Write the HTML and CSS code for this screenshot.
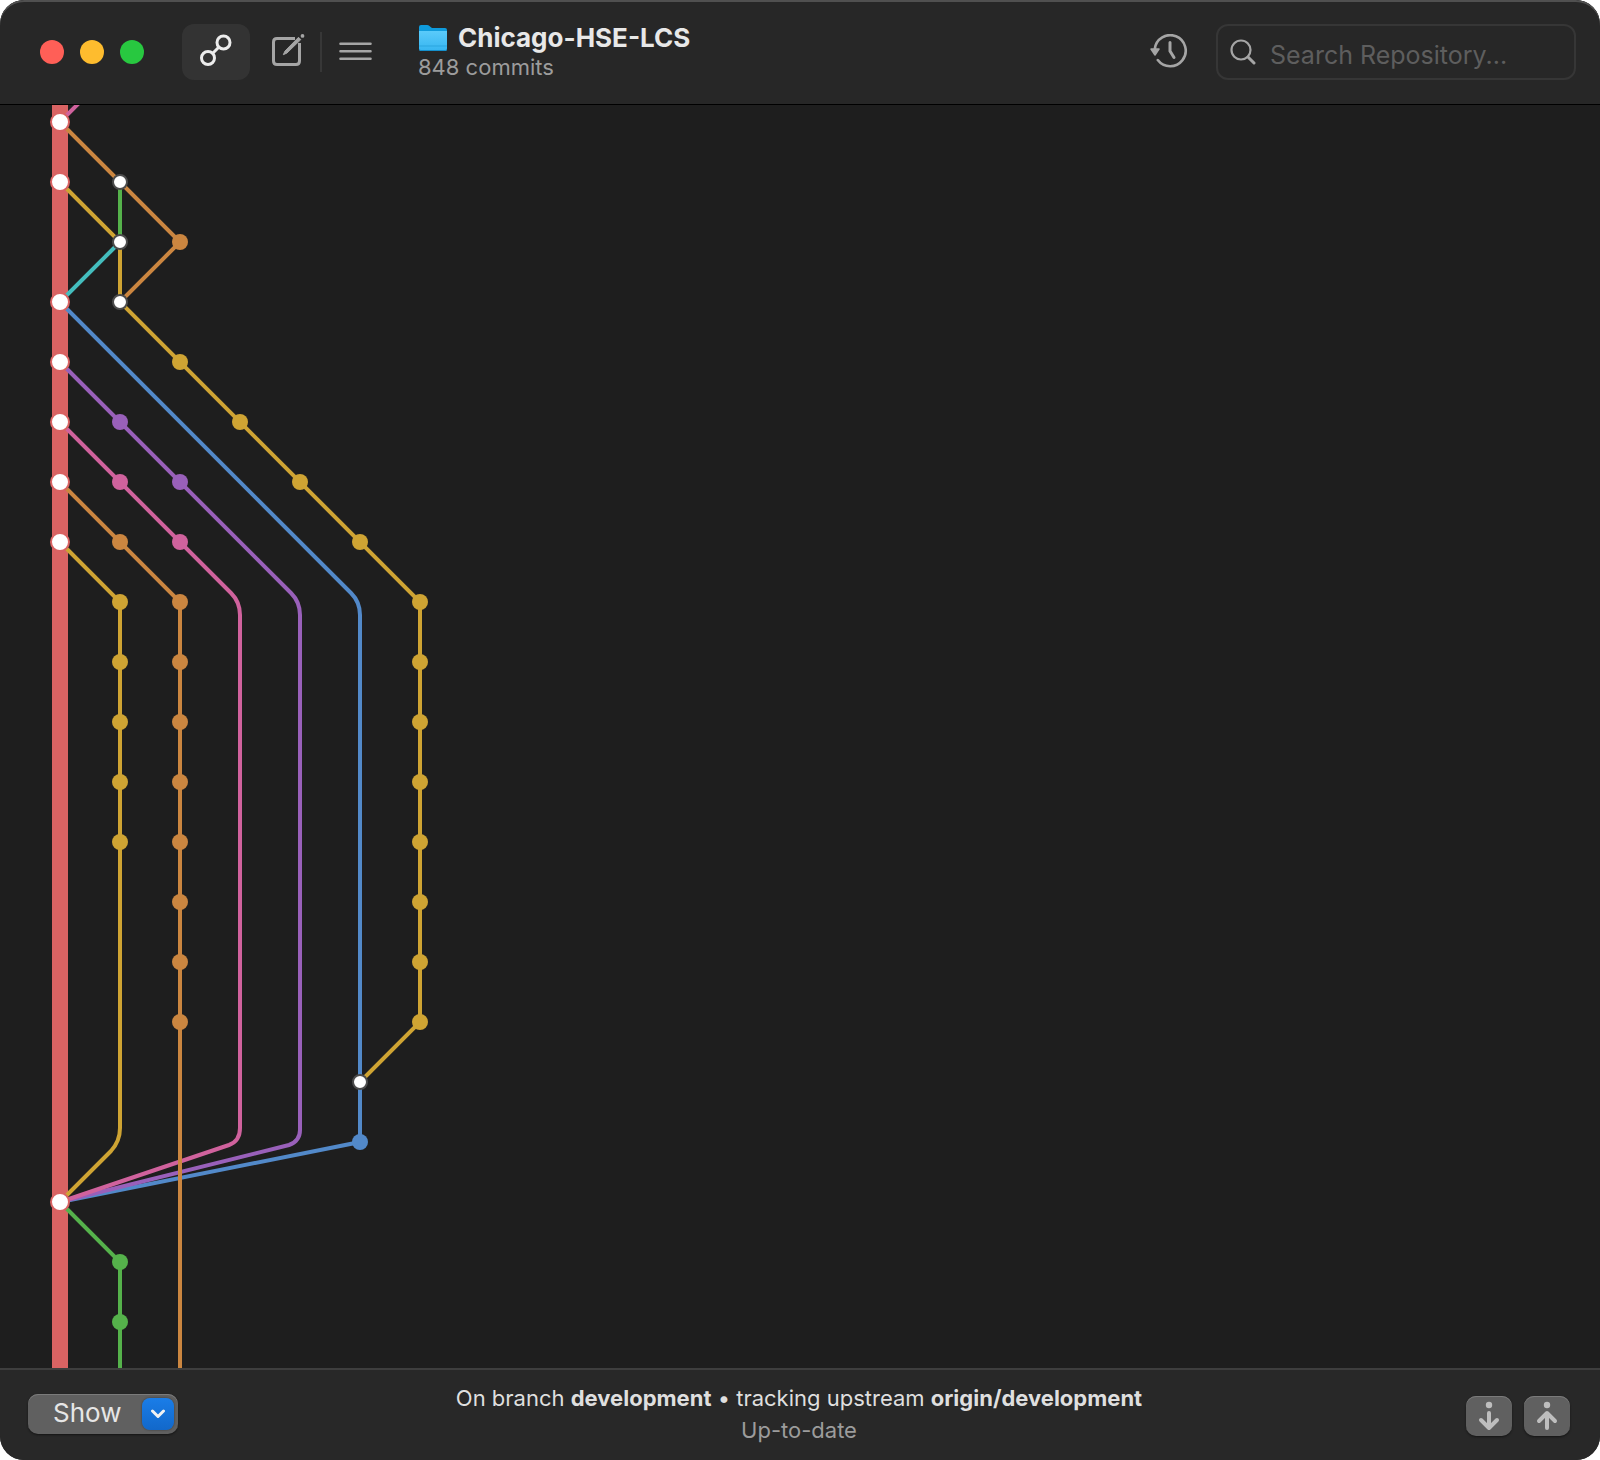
FILE: index.html
```html
<!DOCTYPE html>
<html lang="en">
<head>
<meta charset="utf-8">
<meta name="viewport" content="width=device-width, initial-scale=1">
<title>Chicago-HSE-LCS</title>
<link rel="stylesheet" href="styles.css">
</head>
<body>
<div class="window">
  <header class="toolbar">
    <div class="lights">
      <button class="light light-close" aria-label="Close"></button>
      <button class="light light-minimize" aria-label="Minimize"></button>
      <button class="light light-zoom" aria-label="Zoom"></button>
    </div>
    <div class="tools">
      <button class="tool tool-active" aria-label="Graph">
        <svg width="36" height="36" viewBox="0 0 36 36" fill="none" stroke="currentColor" stroke-width="3"><circle cx="10" cy="24" r="6.500"/><circle cx="25.500" cy="8.500" r="6.500"/><path d="M14.500 19.500l6.500-6.500"/></svg>
      </button>
      <button class="tool tool-compose" aria-label="Working copy">
        <svg width="40" height="36" viewBox="0 0 40 36" fill="none" stroke="currentColor" stroke-width="3"><path d="M30 4.500H12Q8.500 4.500 8.500 8V27Q8.500 30.500 12 30.500H31Q34.500 30.500 34.500 27V9"/><path d="M18.300 20.700L20 17L33.500 3.300L35.800 5.600L22 19z" fill="currentColor" stroke-width="1" stroke-linejoin="round"/><circle cx="37.500" cy="1.900" r="1.900" fill="currentColor" stroke="none"/></svg>
      </button>
      <span class="divider"></span>
      <button class="tool" aria-label="List">
        <svg width="34" height="20" viewBox="0 0 34 20" fill="none" stroke="currentColor" stroke-width="2.600" stroke-linecap="round"><path d="M1.500 1.700H31.500M1.500 9.200H31.500M1.500 16.700H31.500"/></svg>
      </button>
    </div>
    <div class="heading">
      <h1 class="title">
        <svg width="30" height="28" viewBox="0 0 30 28" aria-hidden="true">
          <defs><linearGradient id="folder" x1="0" y1="0" x2="0" y2="1"><stop offset="0" stop-color="#5bcbfa"/><stop offset="1" stop-color="#36b5f0"/></linearGradient></defs>
          <path d="M1 3Q1 1 3 1H9Q10.500 1 11.500 2T14 4H27Q29 4 29 6V24H1z" fill="#0f9bdc"/>
          <path d="M1 7H29V25Q29 27 27 27H3Q1 27 1 25z" fill="url(#folder)"/>
          <path d="M1 22H29" stroke="#2ba5df"/>
          <path d="M1 24.500V25Q1 27 3 27H27Q29 27 29 25V24.500Q28.500 26 27 26H3Q1.500 26 1 24.500z" fill="#148fcb"/>
        </svg>
        <span>Chicago-HSE-LCS</span>
      </h1>
      <p class="subtitle">848 commits</p>
    </div>
    <button class="tool tool-history" aria-label="History">
      <svg width="40" height="36" viewBox="0 0 40 36" fill="none" stroke="currentColor" stroke-width="2.600" stroke-linecap="round"><path d="M6.800 15A15.500 15.500 0 1 1 9.800 26"/><path d="M22 8.500V17L26 23.500" stroke-width="3"/><path d="M3 15H11L7 21z" fill="currentColor" stroke-width="1.500" stroke-linejoin="round"/></svg>
    </button>
    <label class="search">
      <svg width="26" height="26" viewBox="0 0 26 26" fill="none" stroke="currentColor" stroke-width="2.200" stroke-linecap="round"><circle cx="11" cy="11" r="9.500"/><path d="M18 18l6 6" stroke-width="3"/></svg>
      <input class="search-input" type="search" placeholder="Search Repository..." aria-label="Search repository">
    </label>
  </header>

  <main class="canvas">
    <svg class="graph" role="img" aria-label="Commit graph">
      <path class="trunk" d="M60 0V3000"/>
      <g class="edges">
        <path class="blue" d="M60 197L351 488Q360 497 360 510V1037L60 1097"/>
        <path class="purple" d="M60 257L291 488Q300 497 300 510V1025Q300 1036 289 1040L60 1097"/>
        <path class="pink" d="M60 317L231 488Q240 497 240 510V1023Q240 1036 229 1040L60 1097"/>
        <path class="pink" d="M60 17L80 -3"/>
        <path class="orange" d="M60 17L180 137L120 197"/>
        <path class="orange" d="M60 377L180 497V3000"/>
        <path class="green" d="M120 77V137"/>
        <path class="teal" d="M120 137L60 197"/>
        <path class="gold" d="M60 77L120 137V197L420 497V917L360 977"/>
        <path class="gold" d="M60 437L120 497V1023Q120 1036 111 1046L60 1097"/>
        <path class="green" d="M60 1097L120 1157V3000"/>
      </g>
      <g class="dots">
        <g class="dots-orange"><circle cx="180" cy="137" r="8"/><circle cx="120" cy="437" r="8"/><circle cx="180" cy="497" r="8"/><circle cx="180" cy="557" r="8"/><circle cx="180" cy="617" r="8"/><circle cx="180" cy="677" r="8"/><circle cx="180" cy="737" r="8"/><circle cx="180" cy="797" r="8"/><circle cx="180" cy="857" r="8"/><circle cx="180" cy="917" r="8"/></g>
        <g class="dots-gold"><circle cx="180" cy="257" r="8"/><circle cx="240" cy="317" r="8"/><circle cx="300" cy="377" r="8"/><circle cx="360" cy="437" r="8"/><circle cx="420" cy="497" r="8"/><circle cx="420" cy="557" r="8"/><circle cx="420" cy="617" r="8"/><circle cx="420" cy="677" r="8"/><circle cx="420" cy="737" r="8"/><circle cx="420" cy="797" r="8"/><circle cx="420" cy="857" r="8"/><circle cx="420" cy="917" r="8"/><circle cx="120" cy="497" r="8"/><circle cx="120" cy="557" r="8"/><circle cx="120" cy="617" r="8"/><circle cx="120" cy="677" r="8"/><circle cx="120" cy="737" r="8"/></g>
        <g class="dots-purple"><circle cx="120" cy="317" r="8"/><circle cx="180" cy="377" r="8"/></g>
        <g class="dots-pink"><circle cx="120" cy="377" r="8"/><circle cx="180" cy="437" r="8"/></g>
        <g class="dots-blue"><circle cx="360" cy="1037" r="8"/></g>
        <g class="dots-green"><circle cx="120" cy="1157" r="8"/><circle cx="120" cy="1217" r="8"/></g>
        <g class="dots-merge"><circle cx="120" cy="77" r="7"/><circle cx="120" cy="137" r="7"/><circle cx="120" cy="197" r="7"/><circle cx="360" cy="977" r="7"/></g>
        <g class="dots-trunk"><circle cx="60" cy="17" r="9"/><circle cx="60" cy="77" r="9"/><circle cx="60" cy="197" r="9"/><circle cx="60" cy="257" r="9"/><circle cx="60" cy="317" r="9"/><circle cx="60" cy="377" r="9"/><circle cx="60" cy="437" r="9"/><circle cx="60" cy="1097" r="9"/></g>
      </g>
    </svg>
  </main>

  <footer class="statusbar">
    <div class="show">
      <select class="show-select" aria-label="Show"><option>Show</option></select>
      <span class="show-arrow"><svg width="16" height="10" viewBox="0 0 16 10" fill="none" stroke="currentColor" stroke-width="3" stroke-linecap="round" stroke-linejoin="round"><path d="M2.500 2L8 7.500L13.500 2"/></svg></span>
    </div>
    <div class="status">
      <p class="status-branch">On branch <strong>development</strong> • tracking upstream <strong>origin/development</strong></p>
      <p class="status-sync">Up-to-date</p>
    </div>
    <div class="sync">
      <button class="sync-button" aria-label="Pull"><svg width="22" height="30" viewBox="0 0 22 30" fill="none" stroke="currentColor" stroke-width="4" stroke-linecap="round" stroke-linejoin="round"><circle cx="11" cy="4" r="3.200" fill="currentColor" stroke="none"/><path d="M11 12V26M3 19L11 27L19 19"/></svg></button>
      <button class="sync-button" aria-label="Push"><svg width="22" height="30" viewBox="0 0 22 30" fill="none" stroke="currentColor" stroke-width="4" stroke-linecap="round" stroke-linejoin="round"><circle cx="11" cy="4" r="3.200" fill="currentColor" stroke="none"/><path d="M11 27V13M3 20L11 12L19 20"/></svg></button>
    </div>
  </footer>
</div>
</body>
</html>
```
FILE: styles.css
```css
* {
  box-sizing: border-box;
}

body {
  margin: 0;
  background: #fff;
  font-family: Inter, "Liberation Sans", sans-serif;
}

button,
select,
input {
  margin: 0;
  padding: 0;
  border: 0;
  background: none;
  color: inherit;
  font: inherit;
}

h1,
p {
  margin: 0;
}

svg {
  display: block;
}

.window {
  display: flex;
  flex-direction: column;
  min-height: 100vh;
  overflow: hidden;
  border-radius: 24px;
  background: #1e1e1e;
  color: #dfdfdf;
}

/* Toolbar */
.toolbar {
  display: flex;
  align-items: center;
  height: 105px;
  padding: 0 24px 0 40px;
  border-bottom: 1px solid #000;
  border-radius: 24px 24px 0 0;
  background: #272727;
  box-shadow: inset 0 2px #505050;
}

.lights {
  display: flex;
  gap: 16px;
  margin-right: 38px;
}

.light {
  width: 24px;
  height: 24px;
  border-radius: 50%;
}

.light-close {
  background: #ff5f57;
}

.light-minimize {
  background: #febc2e;
}

.light-zoom {
  background: #28c840;
}

.tools {
  display: flex;
  align-items: center;
}

.tool {
  display: flex;
  align-items: center;
  justify-content: center;
  width: 68px;
  height: 56px;
  border-radius: 12px;
  color: #a5a5a5;
}

.tool-active {
  background: #333;
  color: #ececec;
}

.tool-compose {
  width: 70px;
}

.divider {
  width: 2px;
  height: 40px;
  background: #373737;
}

.heading {
  flex: 1;
  margin-left: 28px;
}

.title {
  display: flex;
  align-items: center;
  gap: 10px;
  font-size: 26px;
  line-height: 30px;
  font-weight: 700;
  color: #e8e8e8;
}

.subtitle {
  font-size: 22px;
  line-height: 28px;
  color: #9c9c9c;
}

.tool-history {
  margin-right: 14px;
}

.search {
  display: flex;
  align-items: center;
  gap: 14px;
  width: 360px;
  height: 56px;
  padding: 0 12px;
  border: 2px solid #363636;
  border-radius: 12px;
  color: #a5a5a5;
}

.search-input {
  flex: 1;
  min-width: 0;
  padding-top: 5px;
  outline: 0;
  font-size: 25px;
  line-height: 32px;
}

.search-input::placeholder {
  color: #5e5e5e;
  opacity: 1;
}

/* Commit graph */
.canvas {
  display: flex;
  flex: 1;
  overflow: hidden;
}

.graph {
  width: 100%;
  min-height: 100%;
}

.trunk {
  stroke: #d96363;
  stroke-width: 16;
}

.edges {
  fill: none;
  stroke-width: 4;
}

.orange { stroke: #cb8640; }
.gold { stroke: #cfa433; }
.blue { stroke: #5289c9; }
.purple { stroke: #9960ba; }
.pink { stroke: #d0629d; }
.green { stroke: #55b24b; }
.teal { stroke: #44bdbd; }

.dots-orange { fill: #cb8640; }
.dots-gold { fill: #cfa433; }
.dots-blue { fill: #5289c9; }
.dots-purple { fill: #9960ba; }
.dots-pink { fill: #d0629d; }
.dots-green { fill: #55b24b; }

.dots-merge {
  fill: #fff;
  stroke: #4c4c4c;
  stroke-width: 2;
}

.dots-trunk {
  fill: #fff;
  stroke: #d96363;
  stroke-width: 2;
}

/* Status bar */
.statusbar {
  display: grid;
  grid-template-columns: 1fr auto 1fr;
  align-items: center;
  height: 92px;
  padding: 0 30px 2px 28px;
  border-top: 2px solid #3e3e3e;
  background: #282828;
}

.show {
  position: relative;
  width: 150px;
}

.show-select {
  display: block;
  appearance: none;
  width: 100%;
  height: 40px;
  padding: 0 40px 2px 25px;
  border-radius: 10px;
  background: #606060;
  box-shadow: inset 0 1px #7b7b7b, 0 1px 2px #151515;
  color: #e6e6e6;
  font-size: 26px;
  line-height: 38px;
}

.show-arrow {
  position: absolute;
  top: 4px;
  right: 4px;
  display: flex;
  align-items: center;
  justify-content: center;
  width: 32px;
  height: 32px;
  border-radius: 8px;
  background: linear-gradient(#1a7de8, #1268ca);
  box-shadow: 0 0 2px #333;
  color: #f2f2f2;
  pointer-events: none;
}

.status {
  text-align: center;
  font-size: 22px;
  line-height: 32px;
}

.status-sync {
  color: #9c9c9c;
}

.sync {
  display: flex;
  justify-content: flex-end;
  gap: 12px;
  padding-top: 4px;
}

.sync-button {
  display: flex;
  align-items: center;
  justify-content: center;
  width: 46px;
  height: 40px;
  border-radius: 10px;
  background: #606060;
  box-shadow: inset 0 1px #7b7b7b, 0 1px 2px #151515;
  color: #bebebe;
}
```
